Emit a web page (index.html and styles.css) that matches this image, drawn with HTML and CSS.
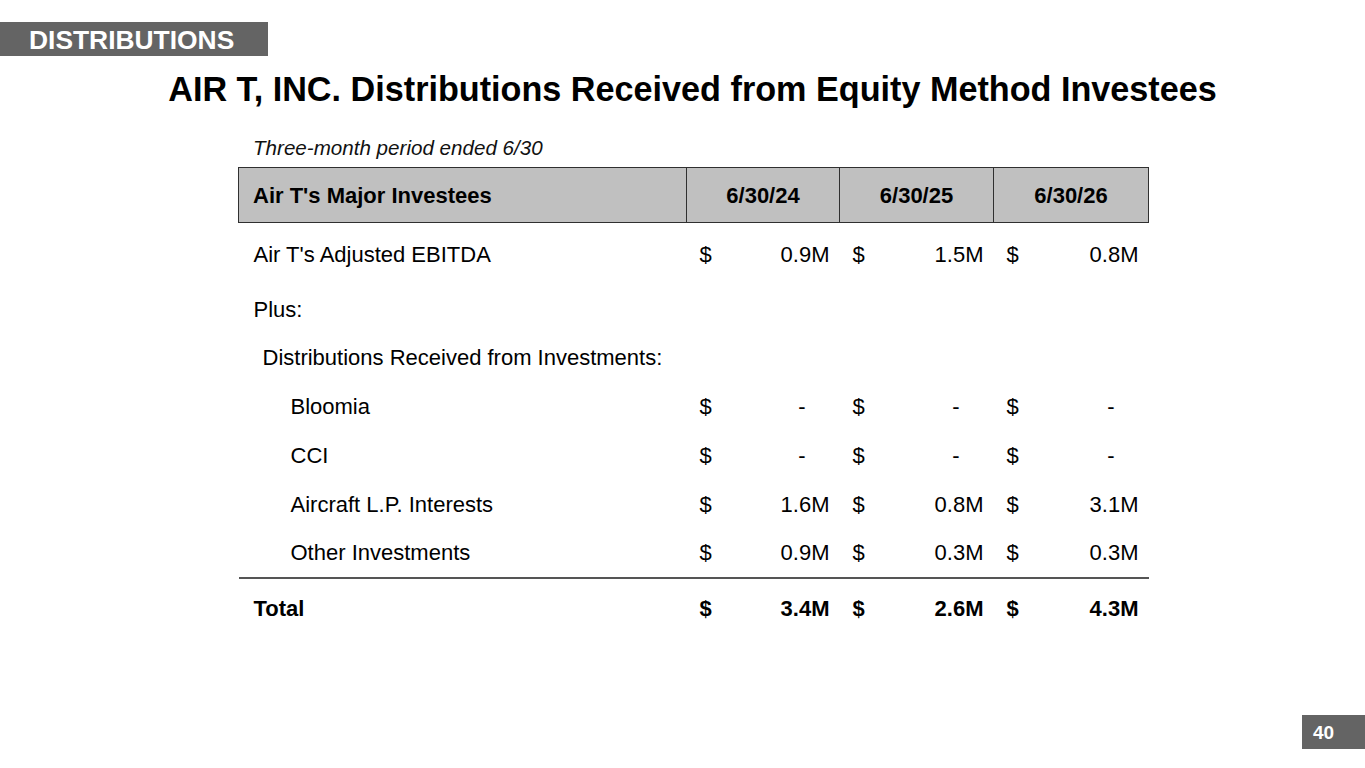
FILE: index.html
```html
<!DOCTYPE html>
<html lang="en">
<head>
<meta charset="utf-8">
<title>Distributions</title>
<link rel="stylesheet" href="styles.css">
</head>
<body>
<div class="slide">
  <div class="tag">DISTRIBUTIONS</div>
  <h1 class="title">AIR T, INC. Distributions Received from Equity Method Investees</h1>
  <div class="content">
    <div class="caption">Three-month period ended 6/30</div>
    <table class="fin">
      <colgroup>
        <col class="c-label">
        <col class="c-dol"><col class="c-val">
        <col class="c-dol"><col class="c-val">
        <col class="c-dol"><col class="c-val">
      </colgroup>
      <thead>
        <tr>
          <th class="lbl">Air T's Major Investees</th>
          <th colspan="2" class="yr">6/30/24</th>
          <th colspan="2" class="yr">6/30/25</th>
          <th colspan="2" class="yr">6/30/26</th>
        </tr>
      </thead>
      <tbody>
        <tr class="r-first">
          <td class="lbl">Air T's Adjusted EBITDA</td>
          <td class="dol">$</td><td class="val">0.9M</td>
          <td class="dol">$</td><td class="val">1.5M</td>
          <td class="dol">$</td><td class="val">0.8M</td>
        </tr>
        <tr class="r-plus">
          <td class="lbl" colspan="7">Plus:</td>
        </tr>
        <tr class="r-std">
          <td class="lbl ind1" colspan="7">Distributions Received from Investments:</td>
        </tr>
        <tr class="r-std">
          <td class="lbl ind2">Bloomia</td>
          <td class="dol">$</td><td class="val dash">-</td>
          <td class="dol">$</td><td class="val dash">-</td>
          <td class="dol">$</td><td class="val dash">-</td>
        </tr>
        <tr class="r-std">
          <td class="lbl ind2">CCI</td>
          <td class="dol">$</td><td class="val dash">-</td>
          <td class="dol">$</td><td class="val dash">-</td>
          <td class="dol">$</td><td class="val dash">-</td>
        </tr>
        <tr class="r-std">
          <td class="lbl ind2">Aircraft L.P. Interests</td>
          <td class="dol">$</td><td class="val">1.6M</td>
          <td class="dol">$</td><td class="val">0.8M</td>
          <td class="dol">$</td><td class="val">3.1M</td>
        </tr>
        <tr class="r-last">
          <td class="lbl ind2">Other Investments</td>
          <td class="dol">$</td><td class="val">0.9M</td>
          <td class="dol">$</td><td class="val">0.3M</td>
          <td class="dol">$</td><td class="val">0.3M</td>
        </tr>
        <tr class="r-total">
          <td class="lbl">Total</td>
          <td class="dol">$</td><td class="val">3.4M</td>
          <td class="dol">$</td><td class="val">2.6M</td>
          <td class="dol">$</td><td class="val">4.3M</td>
        </tr>
      </tbody>
    </table>
  </div>
  <div class="pagenum">40</div>
</div>
</body>
</html>
```

FILE: styles.css
```css
html, body {
  margin: 0;
  padding: 0;
  background: #ffffff;
}

body {
  font-family: "Liberation Sans", Arial, sans-serif;
  color: #000000;
}

.slide {
  position: relative;
  width: 1365px;
  height: 768px;
  overflow: hidden;
  background: #ffffff;
}

.tag {
  margin-top: 22px;
  width: 268px;
  height: 34px;
  box-sizing: border-box;
  padding-left: 29px;
  background: #646464;
  color: #ffffff;
  font-weight: bold;
  font-size: 26.4px;
  line-height: 37px;
  white-space: nowrap;
}

.title {
  margin: 12px 0 0 0;
  text-align: center;
  padding-left: 20px;
  font-size: 34.2px;
  font-weight: bold;
  line-height: 42px;
  white-space: nowrap;
}

.content {
  margin-left: 238px;
  width: 910px;
  margin-top: 27px;
}

.caption {
  padding-left: 15px;
  font-style: italic;
  font-size: 20.6px;
  line-height: 22px;
  height: 30px;
  color: #111;
}

.fin {
  width: 910px;
  border-collapse: collapse;
  table-layout: fixed;
  font-size: 22px;
}

.c-label { width: 448px; }
.c-dol { width: 40px; }
.c-val { width: 113px; }
.fin col:nth-child(4) { width: 41px; }
.fin col:nth-child(6) { width: 42px; }
.fin col:nth-child(7) { width: 113px; }

.fin th {
  background: #c0c0c0;
  border: 1.5px solid #303030;
  height: 52px;
  padding: 2px 0 0 0;
  font-weight: bold;
  font-size: 22px;
}

.fin th.lbl {
  text-align: left;
  padding-left: 14px;
}

.fin th.yr {
  text-align: center;
}

.fin td {
  padding: 0;
  white-space: nowrap;
}

.fin td.lbl {
  padding-left: 15px;
}

.fin td.ind1 { padding-left: 24px; }
.fin td.ind2 { padding-left: 52px; }

.fin td.dol {
  text-align: left;
  padding-left: 13px;
}

.fin td.val {
  text-align: right;
  padding-right: 10px;
}

.fin td.val.dash {
  padding-right: 34px;
}

.r-first td { height: 64px; }
.r-plus td { height: 46px; }
.r-std td { height: 49px; }
.r-last td {
  height: 48px;
  border-bottom: 2px solid #555555;
}
.r-total td {
  height: 60px;
  font-weight: bold;
}

.pagenum {
  position: absolute;
  right: 0;
  top: 715px;
  width: 63px;
  height: 34px;
  box-sizing: border-box;
  padding-left: 11px;
  background: #646464;
  color: #ffffff;
  font-weight: bold;
  font-size: 19px;
  line-height: 36px;
}
```
